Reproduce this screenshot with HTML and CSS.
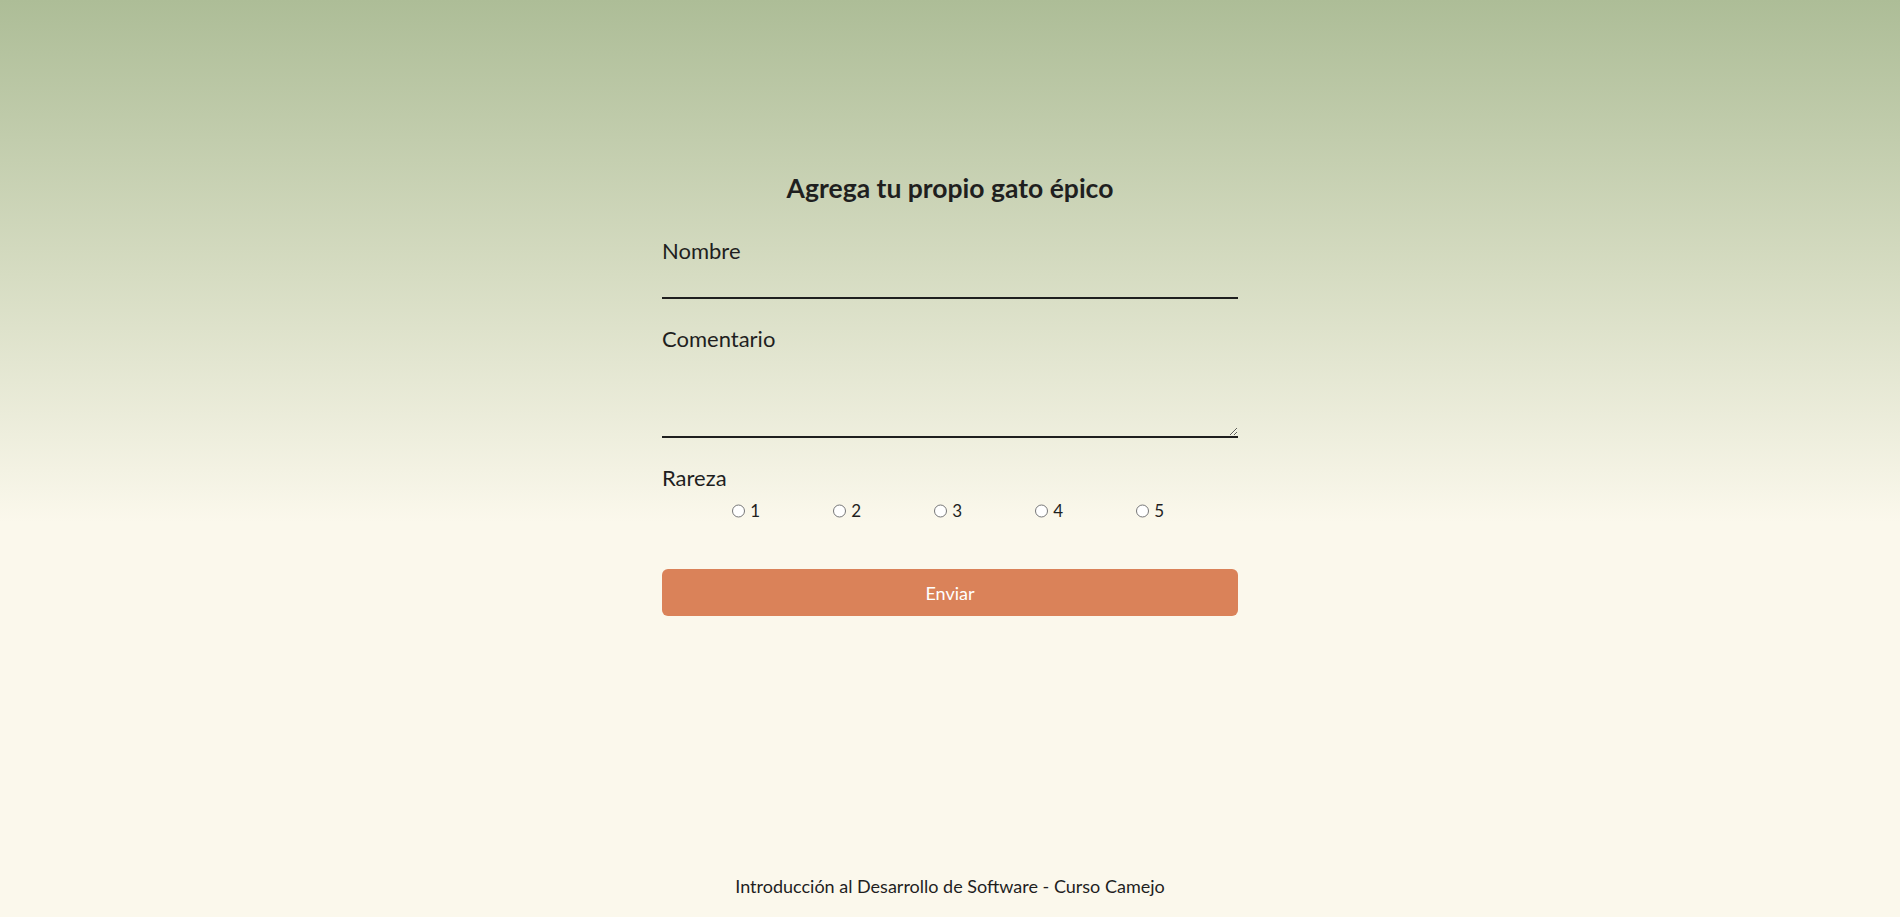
FILE: index.html
```html
<!DOCTYPE html>
<html lang="es">
<head>
<meta charset="utf-8">
<title>Agrega tu propio gato épico</title>
<link rel="stylesheet" href="styles.css">
</head>
<body>
<main class="main">
  <form class="cat-form">
    <h2 class="form-title">Agrega tu propio gato épico</h2>
    <label class="field-label" for="nombre">Nombre</label>
    <input class="text-input" id="nombre" type="text">
    <label class="field-label" for="comentario">Comentario</label>
    <textarea class="text-area" id="comentario"></textarea>
    <span class="field-label">Rareza</span>
    <div class="rarity">
      <label class="rarity-item"><input type="radio" name="rareza" value="1">1</label>
      <label class="rarity-item"><input type="radio" name="rareza" value="2">2</label>
      <label class="rarity-item"><input type="radio" name="rareza" value="3">3</label>
      <label class="rarity-item"><input type="radio" name="rareza" value="4">4</label>
      <label class="rarity-item"><input type="radio" name="rareza" value="5">5</label>
    </div>
    <button class="submit" type="button">Enviar</button>
  </form>
</main>
<footer class="footer">Introducción al Desarrollo de Software - Curso Camejo</footer>
</body>
</html>
```
FILE: styles.css
```css
html, body {
  margin: 0;
  padding: 0;
}
body {
  min-height: 100vh;
  display: flex;
  flex-direction: column;
  font-family: "Lato", "Open Sans", sans-serif;
  color: #1f1f1f;
  background: linear-gradient(to bottom, #adbd97 0%, #d6dcc2 30%, #fbf8ec 57%, #fbf8ec 100%);
  background-attachment: fixed;
}
.main {
  flex: 1;
  display: flex;
  justify-content: center;
}
.cat-form {
  width: 576px;
  display: flex;
  flex-direction: column;
  padding-top: 174px;
}
.form-title {
  margin: 0 0 36px;
  font-size: 26.5px;
  line-height: 29px;
  font-weight: 700;
  text-align: center;
}
.field-label {
  font-size: 22px;
  line-height: 24px;
}
.text-input {
  height: 36px;
  box-sizing: border-box;
  margin: 0 0 28px;
  border: none;
  border-bottom: 2px solid #1f1f1f;
  background: transparent;
  font: inherit;
  outline: none;
}
.text-area {
  height: 87px;
  box-sizing: border-box;
  margin: 0 0 28px;
  border: none;
  border-bottom: 2px solid #1f1f1f;
  background: transparent;
  font: inherit;
  resize: vertical;
  outline: none;
}
.rarity {
  display: flex;
  gap: 73px;
  margin-top: 11px;
  padding-left: 70px;
  font-size: 17px;
  line-height: 19px;
}
.rarity-item {
  display: flex;
  align-items: center;
  width: 28px;
}
.rarity-item input {
  margin: 0 5px 0 0;
  width: 14px;
  height: 14px;
}
.submit {
  margin-top: 49px;
  height: 47px;
  border: none;
  border-radius: 6px;
  background: #da8259;
  color: #ffffff;
  font-family: "Lato", "Open Sans", sans-serif;
  font-size: 18px;
  font-weight: 400;
}
.footer {
  text-align: center;
  font-size: 18px;
  line-height: 19px;
  padding: 0 0 21px;
}
```
